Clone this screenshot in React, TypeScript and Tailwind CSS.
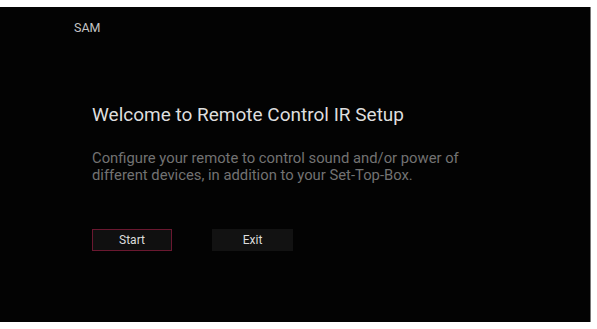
import React from 'react';

const App: React.FC = () => {
  return (
    <div className="w-[597px] h-[329px] bg-white pt-[7px] overflow-hidden" style={{ fontFamily: 'Roboto, "Noto Sans", sans-serif' }}>
      <div className="w-[591px] h-[315px] bg-[#030303] border-r border-[#777] flex flex-col">
        <div className="pl-[74px] pt-[13px] text-[12.5px] leading-[15px] text-[#c4c4c4]">SAM</div>

        <div className="pl-[92px] pt-[69px]">
          <h1 className="text-[19px] leading-[22px] text-[#dedede]">Welcome to Remote Control IR Setup</h1>
          <p className="mt-[24px] text-[14.8px] leading-[17px] text-[#727272] w-[420px]">
            Configure your remote to control sound and/or power of
            <br />
            different devices, in addition to your Set-Top-Box.
          </p>

          <div className="mt-[45px] flex gap-[40px]">
            <button className="w-[80px] h-[22px] border border-[#6a1830] bg-[#101010] text-[12px] text-[#dcdcdc] flex items-center justify-center">
              Start
            </button>
            <button className="w-[81px] h-[22px] bg-[#121212] text-[12px] text-[#dcdcdc] flex items-center justify-center">
              Exit
            </button>
          </div>
        </div>
      </div>
    </div>
  );
};

export default App;
